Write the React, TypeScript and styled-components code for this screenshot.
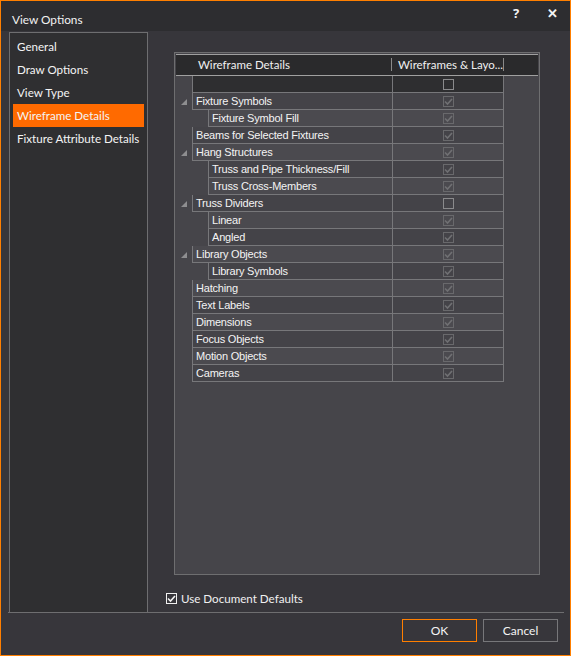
import React from 'react'
import styled, { createGlobalStyle } from 'styled-components'

const GlobalStyle = createGlobalStyle`
  html, body {
    margin: 0;
    padding: 0;
    background: #37363b;
  }
  * {
    box-sizing: border-box;
  }
`

const Window = styled.div`
  width: 571px;
  height: 656px;
  display: flex;
  flex-direction: column;
  border: 1px solid #ff7f00;
  background-color: #37363b;
  font-family: Lato, 'Noto Sans', sans-serif;
  color: #f2f2f2;
  overflow: hidden;
`

const TitleBar = styled.div`
  display: flex;
  align-items: center;
  height: 30px;
  flex-shrink: 0;
  padding-left: 11px;
  background-color: #2d2d30;
  font-size: 11.8px;
`

const Title = styled.span`
  flex-grow: 1;
  padding-top: 7px;
`

const TitleButton = styled.span`
  width: 36px;
  text-align: center;
  font-family: 'Noto Sans', sans-serif;
  font-size: 13px;
  font-weight: 700;
  align-self: flex-start;
  padding-top: 3px;
  color: #f4f4f4;
`

const Main = styled.div`
  display: flex;
  height: 582px;
  margin: 0 6px 0 7px;
  border-bottom: 1px solid #6e6e70;
`

const Sidebar = styled.ul`
  width: 139px;
  margin: 1px 0 -1px 1px;
  padding: 2px 3px;
  list-style: none;
  background-color: #2f2f31;
  border: 1px solid #6e6e70;
  font-size: 11.6px;
`

const SideItem = styled.li<{ $active?: boolean }>`
  height: 23px;
  line-height: 23px;
  padding-left: 4px;
  white-space: nowrap;
  background-color: ${(p) => (p.$active ? '#ff6a00' : 'transparent')};
  color: #f4f4f4;
`

const Content = styled.div`
  display: flex;
  flex-direction: column;
  padding: 21px 0 0 26px;
`

const Frame = styled.div`
  width: 366px;
  height: 523px;
  padding: 1px 1px;
  background-color: #46454a;
  border: 1px solid #6e6e70;
`

const Header = styled.div`
  display: flex;
  align-items: center;
  height: 22px;
  background-color: #2a2a2c;
  border-top: 1px solid #a0a0a0;
  border-bottom: 1px solid #a0a0a0;
  font-size: 11.5px;
  color: #f0f0f0;
`

const HeaderCell = styled.div<{ $width: number; $pad: number }>`
  position: relative;
  width: ${(p) => p.$width}px;
  padding: 0 2px 0 ${(p) => p.$pad}px;
  white-space: nowrap;
  line-height: 20px;

  &::after {
    content: '';
    position: absolute;
    right: 0;
    top: 3px;
    height: 13px;
    border-right: 1px solid #8a8a8a;
  }
`

const Rows = styled.div`
  width: 328px;
  font-family: 'Liberation Sans', Arial, sans-serif;
  font-size: 11px;
  letter-spacing: -0.2px;
`

const Row = styled.div`
  display: flex;
  height: 17px;
`

const Indent = styled.div<{ $level: number }>`
  width: ${(p) => p.$level * 16}px;
  flex-shrink: 0;
  display: flex;
  align-items: center;
  padding-left: 5px;
`

type Tone = 'dark' | 'light' | 'mid'

const toneColor = (t: Tone) => (t === 'dark' ? '#2e2e30' : t === 'light' ? '#4b4a4f' : '#444348')

const NameCell = styled.div<{ $tone: Tone }>`
  flex-grow: 1;
  padding: 1px 0 0 3px;
  line-height: 15px;
  white-space: nowrap;
  border-left: 1px solid #77777a;
  border-bottom: 1px solid #77777a;
  background-color: ${(p) => toneColor(p.$tone)};
  color: #f4f4f4;
`

const ValueCell = styled.div<{ $tone: Tone }>`
  width: 112px;
  flex-shrink: 0;
  display: flex;
  align-items: center;
  justify-content: center;
  border-left: 1px solid #77777a;
  border-right: 1px solid #77777a;
  border-bottom: 1px solid #77777a;
  background-color: ${(p) => toneColor(p.$tone)};
`

const Box = styled.span<{ $enabled?: boolean; $checked?: boolean }>`
  display: flex;
  align-items: center;
  justify-content: center;
  width: 11px;
  height: 11px;
  border: 1px solid ${(p) => (p.$enabled ? '#f0f0f0' : p.$checked ? '#69696c' : '#8a8a8c')};
  margin-left: 1px;
`

const DefaultsRow = styled.label`
  display: flex;
  align-items: center;
  gap: 4px;
  margin: 17px 0 0 -9px;
  font-size: 11.6px;
  color: #f0f0f0;
`

const Footer = styled.div`
  display: flex;
  justify-content: flex-end;
  gap: 6px;
  padding: 6px 12px 0 0;
`

const Button = styled.button<{ $primary?: boolean }>`
  width: 75px;
  height: 23px;
  background-color: #37363b;
  border: 1px solid ${(p) => (p.$primary ? '#ff7f00' : '#77777a')};
  color: #f4f4f4;
  font-family: Lato, 'Noto Sans', sans-serif;
  font-size: 12px;
  padding: 0;
`

const Expander = () => (
  <svg width="6" height="6" viewBox="0 0 6 6">
    <path d="M6 0 L6 6 L0 6 Z" fill="#8e8e90" />
  </svg>
)

const Check = ({ color }: { color: string }) => (
  <svg width="9" height="9" viewBox="0 0 9 9">
    <path d="M1 4.5 L3.5 7 L8 2" fill="none" stroke={color} strokeWidth="1.6" />
  </svg>
)

const CheckBox = ({ checked, enabled }: { checked: boolean; enabled?: boolean }) => (
  <Box $checked={checked} $enabled={enabled}>
    {checked && <Check color={enabled ? '#f4f4f4' : '#707073'} />}
  </Box>
)

interface TreeRow {
  label: string
  level: number
  parent?: boolean
  checked: boolean
}

const rows: TreeRow[] = [
  { label: '', level: 1, checked: false },
  { label: 'Fixture Symbols', level: 1, parent: true, checked: true },
  { label: 'Fixture Symbol Fill', level: 2, checked: true },
  { label: 'Beams for Selected Fixtures', level: 1, checked: true },
  { label: 'Hang Structures', level: 1, parent: true, checked: true },
  { label: 'Truss and Pipe Thickness/Fill', level: 2, checked: true },
  { label: 'Truss Cross-Members', level: 2, checked: true },
  { label: 'Truss Dividers', level: 1, parent: true, checked: false },
  { label: 'Linear', level: 2, checked: true },
  { label: 'Angled', level: 2, checked: true },
  { label: 'Library Objects', level: 1, parent: true, checked: true },
  { label: 'Library Symbols', level: 2, checked: true },
  { label: 'Hatching', level: 1, checked: true },
  { label: 'Text Labels', level: 1, checked: true },
  { label: 'Dimensions', level: 1, checked: true },
  { label: 'Focus Objects', level: 1, checked: true },
  { label: 'Motion Objects', level: 1, checked: true },
  { label: 'Cameras', level: 1, checked: true },
]

const pages = ['General', 'Draw Options', 'View Type', 'Wireframe Details', 'Fixture Attribute Details']

export default function App() {
  return (
    <>
      <GlobalStyle />
      <Window>
        <TitleBar>
          <Title>View Options</Title>
          <TitleButton>?</TitleButton>
          <TitleButton>✕</TitleButton>
        </TitleBar>
        <Main>
          <Sidebar>
            {pages.map((p) => (
              <SideItem key={p} $active={p === 'Wireframe Details'}>
                {p}
              </SideItem>
            ))}
          </Sidebar>
          <Content>
            <Frame>
              <Header>
                <HeaderCell $width={216} $pad={22}>Wireframe Details</HeaderCell>
                <HeaderCell $width={112} $pad={6}>Wireframes &amp; Layo...</HeaderCell>
              </Header>
              <Rows>
                {rows.map((r, i) => {
                  const tone: Tone = i === 0 ? 'dark' : i % 2 === 0 ? 'light' : 'mid'
                  return (
                    <Row key={i}>
                      <Indent $level={r.level}>{r.parent && <Expander />}</Indent>
                      <NameCell $tone={tone}>{r.label}</NameCell>
                      <ValueCell $tone={tone}>
                        <CheckBox checked={r.checked} />
                      </ValueCell>
                    </Row>
                  )
                })}
              </Rows>
            </Frame>
            <DefaultsRow>
              <CheckBox checked enabled />
              Use Document Defaults
            </DefaultsRow>
          </Content>
        </Main>
        <Footer>
          <Button $primary>OK</Button>
          <Button>Cancel</Button>
        </Footer>
      </Window>
    </>
  )
}
